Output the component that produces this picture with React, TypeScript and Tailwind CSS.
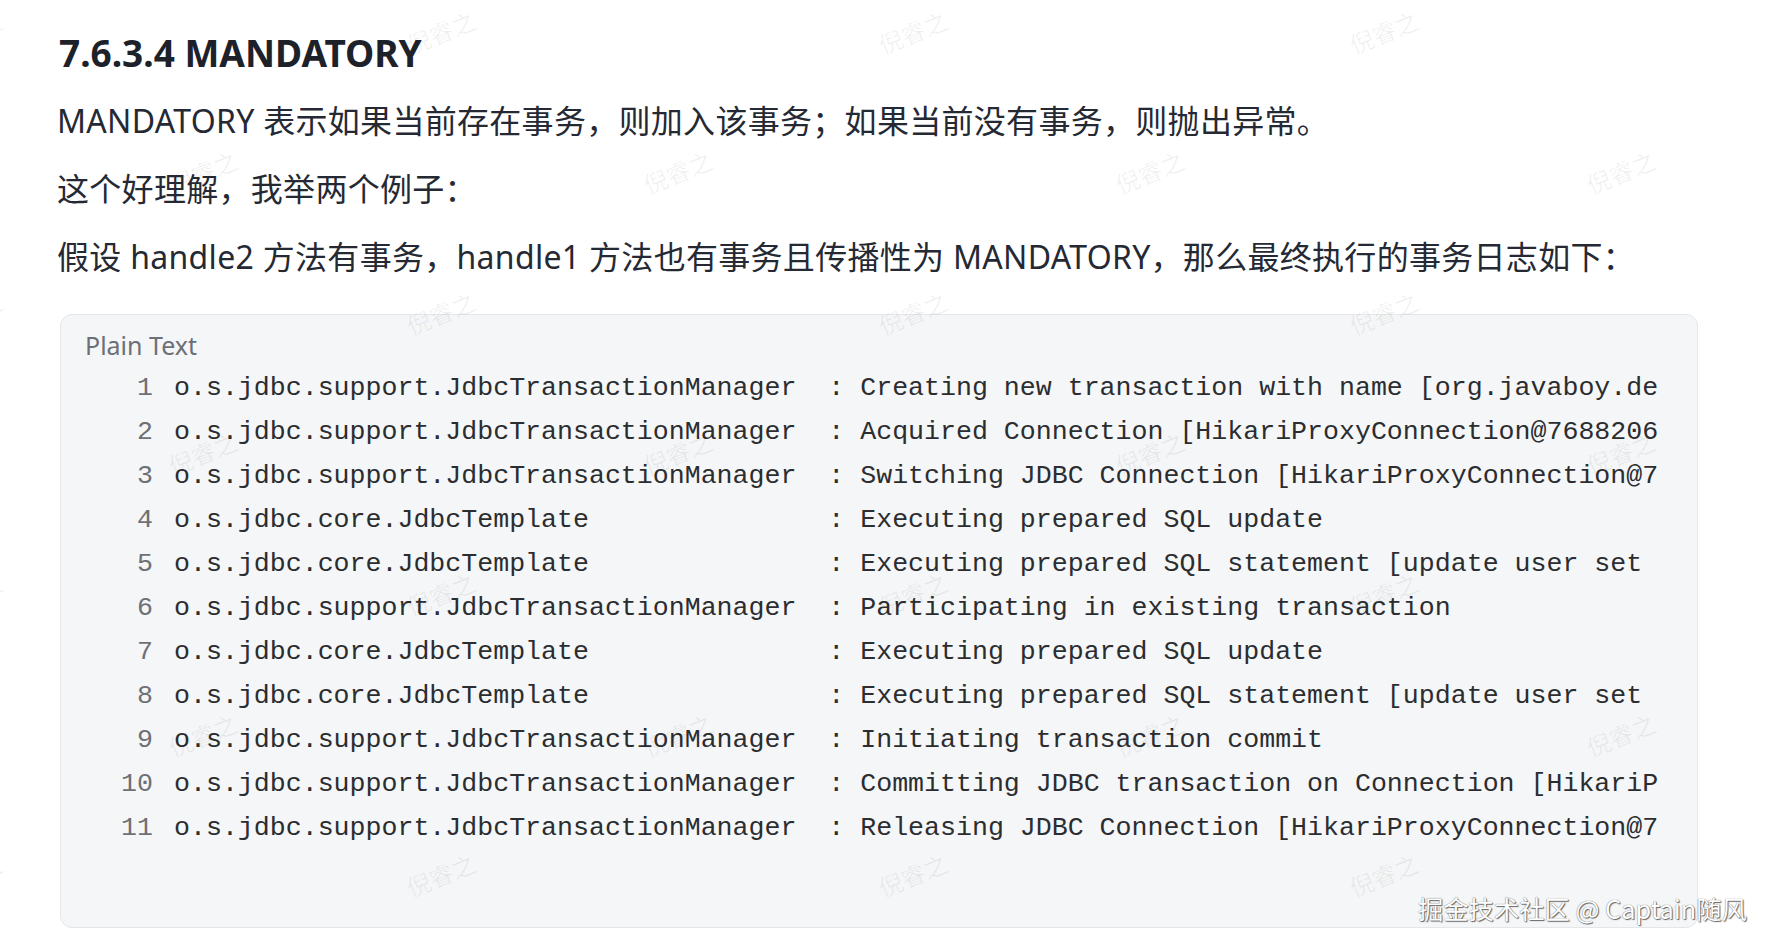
const lines: [string, string][] = [
  ["o.s.jdbc.support.JdbcTransactionManager", "Creating new transaction with name [org.javaboy.de"],
  ["o.s.jdbc.support.JdbcTransactionManager", "Acquired Connection [HikariProxyConnection@7688206"],
  ["o.s.jdbc.support.JdbcTransactionManager", "Switching JDBC Connection [HikariProxyConnection@7"],
  ["o.s.jdbc.core.JdbcTemplate", "Executing prepared SQL update"],
  ["o.s.jdbc.core.JdbcTemplate", "Executing prepared SQL statement [update user set"],
  ["o.s.jdbc.support.JdbcTransactionManager", "Participating in existing transaction"],
  ["o.s.jdbc.core.JdbcTemplate", "Executing prepared SQL update"],
  ["o.s.jdbc.core.JdbcTemplate", "Executing prepared SQL statement [update user set"],
  ["o.s.jdbc.support.JdbcTransactionManager", "Initiating transaction commit"],
  ["o.s.jdbc.support.JdbcTransactionManager", "Committing JDBC transaction on Connection [HikariP"],
  ["o.s.jdbc.support.JdbcTransactionManager", "Releasing JDBC Connection [HikariProxyConnection@7"],
];

// faint "倪睿之" marks tiled over the page
const marks: { x: number; y: number }[] = [];
for (let row = 0; row < 7; row++) {
  const xs = row % 2 === 0 ? [-28, 390, 808, 1225, 1643] : [180, 600, 1018, 1435];
  xs.forEach((x) => marks.push({ x: x * 1.1295, y: (28 + row * 124.5) * 1.1295 }));
}

const App: React.FC = () => {
  return (
    <div className="relative w-full min-h-[951px] bg-white overflow-hidden font-['Noto_Sans','Noto_Sans_CJK_SC',sans-serif]">
      <div className="ml-[60px] w-[1638px] pt-[31px]">
        <h4 className="text-[37px] leading-[44px] font-bold text-[#1d2129] -ml-[1px]">7.6.3.4 MANDATORY</h4>
        <div className="mt-[12px] text-[32px] leading-[68px] tracking-[0.3px] text-[#252933] -ml-[3px]">
          <p>MANDATORY 表示如果当前存在事务，则加入该事务；如果当前没有事务，则抛出异常。</p>
          <p>这个好理解，我举两个例子：</p>
          <p>假设 handle2 方法有事务，handle1 方法也有事务且传播性为 MANDATORY，那么最终执行的事务日志如下：</p>
        </div>

        <div className="mt-[23px] h-[614px] rounded-[12px] border border-[#e4e6e9] bg-[#f5f6f7] overflow-hidden">
          <div className="pl-[24px] pt-[12px] text-[25px] leading-[36px] text-[#6b6f76]">Plain Text</div>
          <div className="mt-[3px] font-['Liberation_Mono',monospace] text-[26.6px] leading-[44px]">
            {lines.map(([src, msg], i) => (
              <div key={i} className="flex whitespace-pre">
                <span className="w-[92px] shrink-0 text-right text-[#6e7075]">{i + 1}</span>
                <span className="ml-[21px] text-[#2b2d31]">{src.padEnd(41, " ") + ": " + msg}</span>
              </div>
            ))}
          </div>
        </div>
      </div>

      {marks.map((m, i) => (
        <span
          key={i}
          className="pointer-events-none absolute -translate-x-1/2 -translate-y-1/2 rotate-[-22deg] text-[24px] leading-none text-black/[0.06] font-['Noto_Sans_CJK_SC',sans-serif]"
          style={{ left: m.x, top: m.y }}
        >
          倪睿之
        </span>
      ))}

      <div className="absolute left-[1418px] top-[892px] text-[25.3px] leading-[32px] text-white font-['Noto_Sans_CJK_SC',sans-serif] [text-shadow:0_0_1px_#4a4a4a,1px_1px_1px_#6a6a6a]">
        掘金技术社区 @ Captain随风
      </div>
    </div>
  );
};

export default App;
